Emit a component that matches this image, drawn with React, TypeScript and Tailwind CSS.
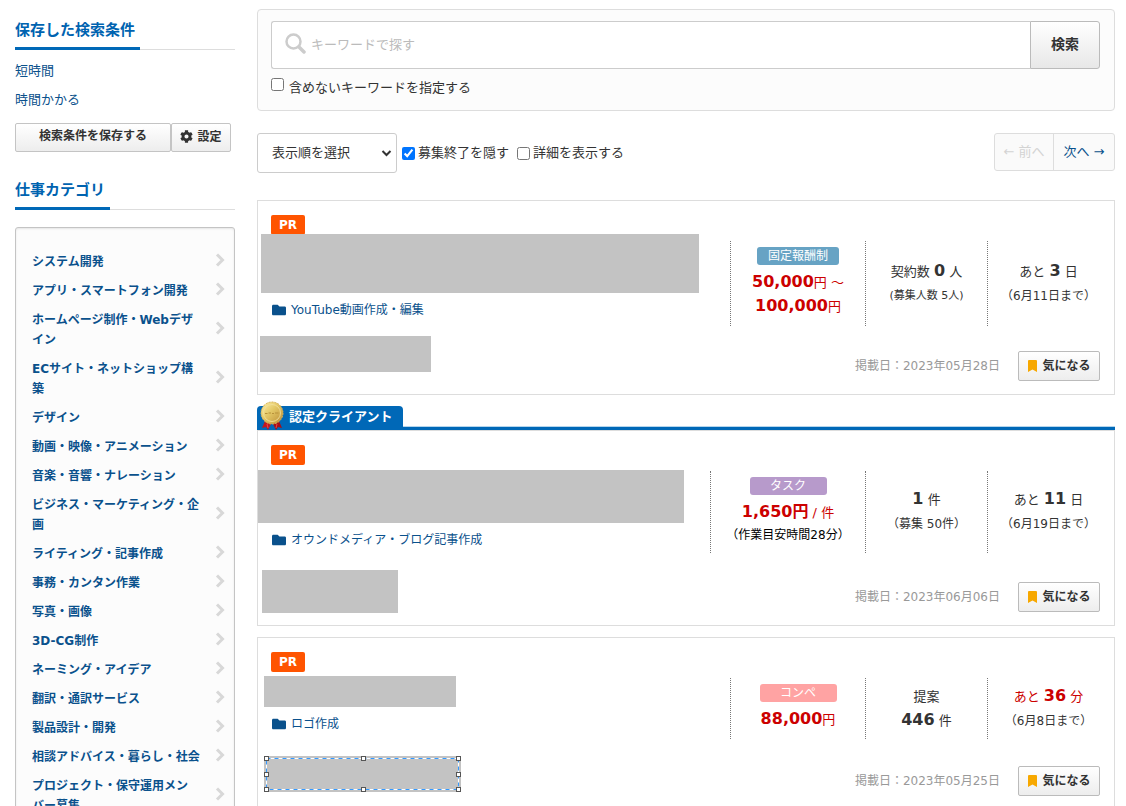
import type { ReactNode } from 'react';
import { FaBookmark, FaCog, FaFolder } from 'react-icons/fa';

interface Job {
  id: string;
  certified?: boolean;
  category: string;
  titleBlock: string;
  clientBlock: string;
  selected?: boolean;
  badge: string;
  badgeClass: string;
  paymentClass: string;
  payment: ReactNode;
  entries: ReactNode;
  deadline: ReactNode;
  postedAt: string;
}

const categories = [
  'システム開発',
  'アプリ・スマートフォン開発',
  'ホームページ制作・Webデザ\nイン',
  'ECサイト・ネットショップ構\n築',
  'デザイン',
  '動画・映像・アニメーション',
  '音楽・音響・ナレーション',
  'ビジネス・マーケティング・企\n画',
  'ライティング・記事作成',
  '事務・カンタン作業',
  '写真・画像',
  '3D-CG制作',
  'ネーミング・アイデア',
  '翻訳・通訳サービス',
  '製品設計・開発',
  '相談アドバイス・暮らし・社会',
  'プロジェクト・保守運用メン\nバー募集',
];

const Num = ({ children }: { children: ReactNode }) => (
  <b className="text-base leading-none">{children}</b>
);

const jobs: Job[] = [
  {
    id: 'youtube',
    category: 'YouTube動画作成・編集',
    titleBlock: '-mt-px ml-[3px] h-[59px] w-[438px]',
    clientBlock: 'mt-4 mb-[22px] ml-[2px] h-9 w-[171px]',
    badge: '固定報酬制',
    badgeClass: 'w-[82px] bg-[#67a3c4]',
    paymentClass: 'w-[135px]',
    payment: (
      <>
        <p className="text-[#c00]"><Num>50,000</Num>円 ～</p>
        <p className="text-[#c00]"><Num>100,000</Num>円</p>
      </>
    ),
    entries: (
      <>
        <p>契約数 <Num>0</Num> 人</p>
        <p className="text-[11px] leading-6">(募集人数 5人)</p>
      </>
    ),
    deadline: (
      <>
        <p>あと <Num>3</Num> 日</p>
        <p className="text-xs leading-6">（6月11日まで）</p>
      </>
    ),
    postedAt: '2023年05月28日',
  },
  {
    id: 'media',
    certified: true,
    category: 'オウンドメディア・ブログ記事作成',
    titleBlock: 'mt-[5px] h-[53px] w-[426px]',
    clientBlock: 'mt-5 mb-3 ml-1 h-[43px] w-[136px]',
    badge: 'タスク',
    badgeClass: 'w-[77px] bg-[#b79acb]',
    paymentClass: 'w-[155px]',
    payment: (
      <>
        <p className="text-[#c00]"><Num>1,650円</Num> / 件</p>
        <p className="text-xs leading-[21px] text-black">（作業目安時間28分）</p>
      </>
    ),
    entries: (
      <>
        <p><Num>1</Num> 件</p>
        <p className="text-xs leading-6">（募集 50件）</p>
      </>
    ),
    deadline: (
      <>
        <p>あと <Num>11</Num> 日</p>
        <p className="text-xs leading-6">（6月19日まで）</p>
      </>
    ),
    postedAt: '2023年06月06日',
  },
  {
    id: 'logo',
    category: 'ロゴ作成',
    titleBlock: 'mt-1 ml-[6px] h-[31px] w-[192px]',
    clientBlock: 'mt-[22px] mb-[17px] ml-[6px] h-9 w-[197px]',
    selected: true,
    badge: 'コンペ',
    badgeClass: 'w-[77px] bg-[#ffa3a3]',
    paymentClass: 'w-[135px]',
    payment: <p className="text-[#c00]"><Num>88,000</Num>円</p>,
    entries: (
      <>
        <p>提案</p>
        <p><Num>446</Num> 件</p>
      </>
    ),
    deadline: (
      <>
        <p className="text-[#c00]">あと <Num>36</Num> 分</p>
        <p className="text-xs leading-6">（6月8日まで）</p>
      </>
    ),
    postedAt: '2023年05月25日',
  },
];

const Medal = () => (
  <svg className="absolute -top-[5px] left-[3px] h-[30px] w-6" viewBox="0 0 24 30">
    <defs>
      <linearGradient id="gold" x1="0" y1="0" x2="1" y2="1">
        <stop offset="0" stopColor="#fff0a8" />
        <stop offset="0.45" stopColor="#e3c765" />
        <stop offset="1" stopColor="#b98a33" />
      </linearGradient>
    </defs>
    <path d="M5 20 2 27l4-1 2 3 4-8z" fill="#c4161c" />
    <path d="m19 20 3 7-4-1-2 3-4-8z" fill="#a80f16" />
    <path d="m7 23 1 4M17 23l-1 4" stroke="#e8474c" />
    <circle cx="12" cy="12" r="11" fill="url(#gold)" stroke="#d4b056" strokeDasharray="2 1" />
    <circle cx="12" cy="12" r="8.5" fill="none" stroke="#f3e2a0" strokeWidth="0.8" />
    <path d="M5 12.500h2.500M8.500 12h2.500M12 12.500h2M15 12h3.500" stroke="#b8923a" strokeWidth="1.200" />
  </svg>
);

const SelectionFrame = () => (
  <svg className="absolute inset-0 h-full w-full" viewBox="0 0 197 36">
    <rect x="2.500" y="2.500" width="192" height="31" fill="none" stroke="#fff" />
    <rect x="2.500" y="2.500" width="192" height="31" fill="none" stroke="#3399ff" strokeDasharray="4 4" />
    {[[2, 2], [99, 2], [194, 2], [2, 18], [194, 18], [2, 33], [99, 33], [194, 33]].map(([x, y]) => (
      <rect key={`${x}-${y}`} x={x - 1.5} y={y - 1.5} width="4" height="4" fill="#fff" stroke="#555" />
    ))}
  </svg>
);

const SideHeading = ({ children }: { children: ReactNode }) => (
  <h2 className="flex border-b border-[#ddd] text-[15px] leading-6 font-bold text-[#0063b0]">
    <span className="-mb-px border-b-3 border-[#0068b7] pt-px pr-[5px] pb-[5px]">{children}</span>
  </h2>
);

const Sidebar = () => (
  <aside className="w-[220px] shrink-0 pt-[17px]">
    <SideHeading>保存した検索条件</SideHeading>
    <ul className="mt-[11px] text-[13px] leading-5 text-[#0a518c]">
      <li className="mb-[9px]"><a href="#short">短時間</a></li>
      <li><a href="#long">時間かかる</a></li>
    </ul>
    <div className="mt-[13px] flex text-xs font-bold text-[#333]">
      <button className="h-[29px] w-[156px] rounded-xs border border-[#c4c4c4] bg-linear-to-b from-white to-[#ededed] pb-[3px]">
        検索条件を保存する
      </button>
      <button className="flex h-[29px] w-[60px] items-center justify-center gap-1 rounded-xs border border-[#c4c4c4] bg-linear-to-b from-white to-[#ededed] pb-[2px]">
        <FaCog className="size-[13px]" />
        設定
      </button>
    </div>

    <div className="mt-[25px]">
      <SideHeading>仕事カテゴリ</SideHeading>
    </div>
    <ul className="mt-[17px] rounded-[3px] border border-[#c4c4c4] bg-[#fcfcfc] pt-6 pr-[9px] pb-6 pl-4 shadow-[inset_0_1px_2px_#e5e5e5]">
      {categories.map(name => (
        <li key={name} className="mb-[9px]">
          <a href="#category" className="flex items-center justify-between text-xs leading-5 font-bold text-[#0a518c]">
            <span className="whitespace-pre">{name}</span>
            <svg className="mb-1 h-[14px] w-[10px]" viewBox="0 0 10 14" fill="none" stroke="#d8d8d8" strokeWidth="3">
              <path d="m2 1.500 5.500 5.500L2 12.500" />
            </svg>
          </a>
        </li>
      ))}
    </ul>
  </aside>
);

const SearchPanel = () => (
  <form className="rounded border border-[#ddd] bg-[#fcfcfc] pt-[11px] pr-[14px] pb-3 pl-[13px]" onSubmit={e => e.preventDefault()}>
    <div className="relative flex">
      <svg className="absolute top-3 left-[14px] size-[21px]" viewBox="0 0 21 21" fill="none" stroke="#ccc">
        <circle cx="8.500" cy="8.500" r="7" strokeWidth="2.500" />
        <path d="m14 14 5 5" strokeWidth="3.500" strokeLinecap="round" />
      </svg>
      <input
        type="text"
        aria-label="キーワード"
        placeholder="キーワードで探す"
        className="h-12 min-w-0 flex-1 rounded-l-[3px] border border-r-0 border-[#ccc] bg-white pb-[2px] pl-[39px] text-[13px] placeholder:text-[#bbb]"
      />
      <button className="h-12 w-[70px] rounded-r-[3px] border border-[#bbb] bg-linear-to-b from-white to-[#e8e8e8] pb-[2px] text-sm font-bold text-[#333]">
        検索
      </button>
    </div>
    <label className="mt-[9px] flex gap-[5px] text-[13px] leading-5">
      <input type="checkbox" className="size-[13px]" />
      含めないキーワードを指定する
    </label>
  </form>
);

const Toolbar = () => (
  <div className="mt-[22px] flex h-10 items-center text-[13px]">
    <div className="relative mr-[5px]">
      <select aria-label="表示順" className="h-10 w-[140px] appearance-none rounded-[3px] border border-[#ccc] bg-white pl-[14px]">
        <option>表示順を選択</option>
      </select>
      <svg className="pointer-events-none absolute top-4 right-[5px] h-2 w-[11px]" viewBox="0 0 11 8" fill="none" stroke="#333" strokeWidth="2">
        <path d="m1.500 2 4 4 4-4" />
      </svg>
    </div>
    <label className="mr-2 flex items-center gap-[3px]">
      <input type="checkbox" defaultChecked className="size-[13px]" />
      募集終了を隠す
    </label>
    <label className="flex items-center gap-[3px]">
      <input type="checkbox" className="size-[13px]" />
      詳細を表示する
    </label>
    <nav className="mb-[2px] ml-auto flex h-[38px] items-center rounded-[3px] border border-[#ddd] bg-[#fafafa]">
      <span className="w-[58px] text-center text-[#d3d3d3]">← 前へ</span>
      <a href="#next" className="flex h-full w-[61px] items-center justify-center border-l border-[#ddd] text-[#0a518c]">
        次へ →
      </a>
    </nav>
  </div>
);

const JobCard = ({ job }: { job: Job }) => (
  <li className="mb-[11px]">
    {job.certified && (
      <div className="border-b-3 border-[#0068b7] shadow-[inset_0_-1px_#b5d5ec]">
        <div className="relative flex h-[21px] w-[146px] items-center rounded-t bg-[#0068b7] pl-8 text-[13px] font-bold text-white">
          <Medal />
          認定クライアント
        </div>
      </div>
    )}
    <article className="flex justify-between border border-[#ddd] bg-white">
      <div>
        <span className="mt-[14px] ml-[13px] flex h-5 w-[34px] items-center justify-center rounded-xs bg-[#ff5400] text-xs font-bold text-white">
          PR
        </span>
        <div className={`bg-[#c3c3c3] ${job.titleBlock}`} />
        <a href="#job" className="mt-[7px] ml-[14px] flex items-center gap-[5px] text-xs leading-5 text-[#0a518c]">
          <FaFolder className="size-[14px]" />
          {job.category}
        </a>
        <div className={`relative bg-[#c3c3c3] ${job.clientBlock}`}>
          {job.selected && <SelectionFrame />}
        </div>
      </div>

      <div className="flex shrink-0 flex-col justify-between pt-10 pb-[13px]">
        <div className="mr-[5px] flex justify-end text-center text-[13px] leading-6">
          <div className={`border-l border-dotted border-[#777] pt-[6px] pb-[7px] ${job.paymentClass}`}>
            <span className={`mx-auto mb-[6px] flex h-[18px] items-center justify-center rounded-[3px] text-xs text-white ${job.badgeClass}`}>
              {job.badge}
            </span>
            {job.payment}
          </div>
          <div className="flex w-[122px] flex-col justify-center border-l border-dotted border-[#777]">
            {job.entries}
          </div>
          <div className="flex w-[122px] flex-col justify-center border-l border-dotted border-[#777]">
            {job.deadline}
          </div>
        </div>
        <div className="mr-[14px] flex items-center justify-end gap-[18px] text-xs">
          <span className="text-[#999]">掲載日：{job.postedAt}</span>
          <button className="flex h-[30px] w-[82px] items-center justify-center gap-1 rounded-xs border border-[#bbb] bg-linear-to-b from-white to-[#ededed] font-bold text-[#333]">
            <FaBookmark className="h-3 w-[11px] text-[#f7a800]" />
            気になる
          </button>
        </div>
      </div>
    </article>
  </li>
);

export default function App() {
  return (
    <div className="flex h-screen gap-[22px] overflow-hidden bg-white pr-[11px] pl-[15px] font-['DejaVu_Sans','Noto_Sans_CJK_JP',sans-serif] text-[#333]" lang="ja">
      <Sidebar />
      <main className="min-w-0 flex-1 pt-[9px]">
        <SearchPanel />
        <Toolbar />
        <ul className="mt-[27px]">
          {jobs.map(job => <JobCard key={job.id} job={job} />)}
        </ul>
      </main>
    </div>
  );
}
